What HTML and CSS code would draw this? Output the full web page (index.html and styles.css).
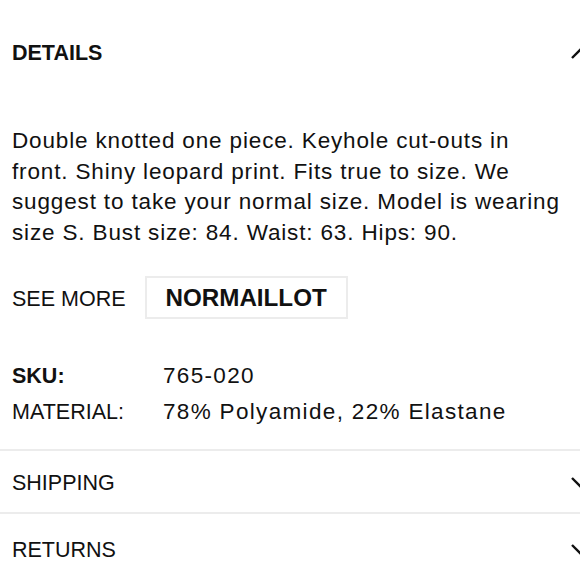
FILE: index.html
```html
<!DOCTYPE html>
<html>
<head>
<meta charset="utf-8">
<link rel="stylesheet" href="styles.css">
</head>
<body>
<div class="page">
  <section class="section open">
    <div class="head">
      <h2 class="title bold">DETAILS</h2>
      <svg class="chev" width="22" height="12" viewBox="0 0 22 12"><polyline points="1,11 11,1 21,11" fill="none" stroke="#111" stroke-width="2.4"/></svg>
    </div>
    <div class="body">
      <p class="desc">Double knotted one piece. Keyhole cut-outs in<br>front. Shiny leopard print. Fits true to size. We<br>suggest to take your normal size. Model is wearing<br>size S. Bust size: 84. Waist: 63. Hips: 90.</p>
      <div class="more">
        <span class="more-label">SEE MORE</span>
        <span class="brand">NORMAILLOT</span>
      </div>
      <dl class="specs">
        <dt class="bold">SKU:</dt><dd>765-020</dd>
        <dt>MATERIAL:</dt><dd>78% Polyamide, 22% Elastane</dd>
      </dl>
    </div>
  </section>
  <section class="section">
    <div class="head closed">
      <h2 class="title">SHIPPING</h2>
      <svg class="chev" width="22" height="12" viewBox="0 0 22 12"><polyline points="1,1 11,11 21,1" fill="none" stroke="#111" stroke-width="2.4"/></svg>
    </div>
  </section>
  <section class="section">
    <div class="head closed last">
      <h2 class="title">RETURNS</h2>
      <svg class="chev" width="22" height="12" viewBox="0 0 22 12"><polyline points="1,1 11,11 21,1" fill="none" stroke="#111" stroke-width="2.4"/></svg>
    </div>
  </section>
</div>
</body>
</html>
```
FILE: styles.css
```css
html, body {
  margin: 0;
  padding: 0;
  background: #fff;
  overflow: hidden;
}
.page {
  width: 580px;
  overflow: hidden;
  font-family: "Liberation Sans", Arial, sans-serif;
  color: #111;
  font-size: 21.5px;
}
.section {
  width: 605px;
  border-bottom: 2px solid #ececec;
}
.head {
  display: flex;
  justify-content: space-between;
  align-items: center;
  height: 84px;
  padding: 22px 12px 0;
  box-sizing: border-box;
}
.head.closed {
  height: 61px;
  padding-top: 3px;
}
.head.last {
  height: 66px;
  padding-top: 6px;
}
.title {
  margin: 0;
  font-size: 21.5px;
  font-weight: normal;
  line-height: 30px;
}
.bold {
  font-weight: bold;
}
.chev {
  display: block;
}
.body {
  padding: 42px 12px 19px;
}
.desc {
  margin: 0 -30px 0 0;
  font-size: 22.5px;
  letter-spacing: 0.85px;
  line-height: 30.5px;
  white-space: nowrap;
}
.more {
  display: flex;
  align-items: center;
  gap: 19px;
  margin-top: 28px;
}
.more-label {
  padding-top: 3px;
}
.brand {
  display: inline-block;
  border: 2px solid #ececec;
  padding: 0 19px;
  height: 43px;
  box-sizing: border-box;
  line-height: 39px;
  font-weight: bold;
  font-size: 24.2px;
}
.specs {
  display: grid;
  grid-template-columns: 151px 1fr;
  align-items: baseline;
  margin: 39px 0 0;
}
.specs dt, .specs dd {
  margin: 0;
  line-height: 35px;
}
.specs dd {
  font-size: 22.5px;
  letter-spacing: 1.33px;
}
```
